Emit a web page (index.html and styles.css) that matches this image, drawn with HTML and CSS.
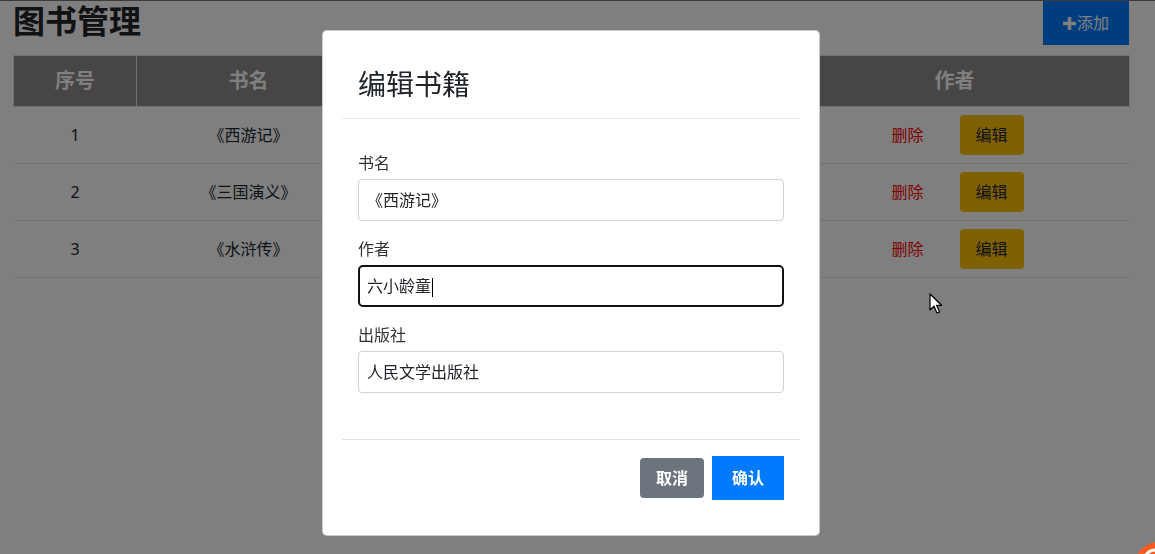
FILE: index.html
```html
<!DOCTYPE html>
<html lang="zh-CN">

<head>
    <meta charset="UTF-8">
    <meta name="viewport" content="width=device-width, initial-scale=1.0">
    <title>图书管理</title>
    <link rel="stylesheet" href="styles.css">
</head>

<body>
    <div class="app">
        <div class="topbar">
            <h2 class="page-title">图书管理</h2>
            <button class="btn-add">
                <svg class="icon-plus" width="13" height="13" viewBox="0 0 13 13">
                    <rect x="4.75" y="0" width="3.5" height="13" fill="currentColor"></rect>
                    <rect x="0" y="4.75" width="13" height="3.5" fill="currentColor"></rect>
                </svg>添加
            </button>
        </div>

        <table class="book-table">
            <colgroup>
                <col class="col-id">
                <col class="col-name">
                <col class="col-press">
                <col class="col-op">
            </colgroup>
            <thead>
                <tr>
                    <th>序号</th>
                    <th>书名</th>
                    <th>出版社</th>
                    <th>作者</th>
                </tr>
            </thead>
            <tbody>
                <tr>
                    <td>1</td>
                    <td>《西游记》</td>
                    <td>吴承恩 / 人民文学出版社</td>
                    <td>
                        <div class="actions">
                            <a class="link-del" href="#">删除</a>
                            <button class="btn-edit">编辑</button>
                        </div>
                    </td>
                </tr>
                <tr>
                    <td>2</td>
                    <td>《三国演义》</td>
                    <td>罗贯中 / 人民文学出版社</td>
                    <td>
                        <div class="actions">
                            <a class="link-del" href="#">删除</a>
                            <button class="btn-edit">编辑</button>
                        </div>
                    </td>
                </tr>
                <tr>
                    <td>3</td>
                    <td>《水浒传》</td>
                    <td>施耐庵 / 人民文学出版社</td>
                    <td>
                        <div class="actions">
                            <a class="link-del" href="#">删除</a>
                            <button class="btn-edit">编辑</button>
                        </div>
                    </td>
                </tr>
            </tbody>
        </table>
    </div>

    <!-- 编辑弹窗 -->
    <div class="modal">
        <div class="modal-dialog">
            <div class="modal-content">
                <div class="modal-header">
                    <h3 class="modal-title">编辑书籍</h3>
                </div>
                <div class="modal-body">
                    <div class="form-group">
                        <label class="form-label">书名</label>
                        <div class="form-control">《西游记》</div>
                    </div>
                    <div class="form-group">
                        <label class="form-label">作者</label>
                        <div class="form-control is-focus">六小龄童<span class="caret"></span></div>
                    </div>
                    <div class="form-group">
                        <label class="form-label">出版社</label>
                        <div class="form-control">人民文学出版社</div>
                    </div>
                </div>
                <div class="modal-footer">
                    <button class="btn-cancel">取消</button>
                    <button class="btn-ok">确认</button>
                </div>
            </div>
        </div>
    </div>

    <svg class="mouse" width="14" height="22" viewBox="0 0 14 22">
        <path d="M1 1 L1 17 L5 13.2 L8 20 L10.5 19 L7.6 12.3 L12.6 12.3 Z" fill="#fff" stroke="#000" stroke-width="1.2" stroke-linejoin="round"></path>
    </svg>

    <svg class="widget" width="20" height="13" viewBox="0 0 20 13">
        <circle cx="24" cy="26" r="25" fill="#ff5a1f"></circle>
        <circle cx="20" cy="20" r="11" fill="none" stroke="#fff" stroke-width="3"></circle>
    </svg>
</body>

</html>
```

FILE: styles.css
```css
* {
    box-sizing: border-box;
}

html,
body {
    margin: 0;
    padding: 0;
}

body {
    font-family: "Noto Sans", "Noto Sans CJK SC", sans-serif;
    font-size: 16px;
    line-height: 24px;
    color: #212529;
    background: #fff;
    border-top: 1px solid #777;
    height: 554px;
    overflow: hidden;
}

button {
    font-family: inherit;
    font-size: 16px;
    line-height: 24px;
    cursor: pointer;
}

.app {
    width: 1116px;
    margin-left: 13px;
}

.topbar {
    display: flex;
    justify-content: space-between;
    align-items: flex-start;
    height: 44px;
    margin-bottom: 10px;
}

.page-title {
    margin: 0;
    font-size: 32px;
    line-height: 40px;
    font-weight: bold;
}

.btn-add {
    display: flex;
    align-items: center;
    gap: 1px;
    height: 44px;
    padding: 0 20px;
    border: 0;
    background: #007bff;
    color: #fff;
}

.icon-plus {
    display: block;
}

/* 表格 */
.book-table {
    width: 1116px;
    table-layout: fixed;
    border-collapse: collapse;
    text-align: center;
}

.col-id {
    width: 123px;
}

.col-name {
    width: 224px;
}

.col-press {
    width: 419px;
}

.col-op {
    width: 350px;
}

.book-table th {
    padding: 11px 0;
    line-height: 28px;
    font-size: 20px;
    font-weight: bold;
    color: #fff;
    background: #8f8a8a;
    border: 1px solid #dee2e6;
}

.book-table td {
    padding: 8px;
    border-bottom: 1px solid #dee2e6;
    vertical-align: middle;
}

.actions {
    display: flex;
    justify-content: center;
    align-items: center;
    gap: 36px;
    padding-left: 6px;
}

.link-del {
    color: #ff0000;
    text-decoration: none;
}

.btn-edit {
    height: 40px;
    padding: 0 16px;
    border: 0;
    border-radius: 4px;
    background: #ffc107;
    color: #212529;
}

/* 弹窗 */
.modal {
    position: fixed;
    top: 0;
    left: 0;
    right: 0;
    bottom: 0;
    background: rgba(0, 0, 0, 0.5);
}

.modal-dialog {
    width: 498px;
    margin: 30px 0 0 322px;
}

.modal-content {
    background: #fff;
    border: 1px solid rgba(0, 0, 0, 0.2);
    border-radius: 5px;
    padding: 19px;
}

.modal-header {
    padding: 16px;
    border-bottom: 1px solid #e9ecef;
}

.modal-title {
    margin: 0;
    font-size: 28px;
    line-height: 36px;
    font-weight: normal;
    color: #212529;
}

.modal-body {
    padding: 32px 16px 30px;
}

.form-group {
    margin-bottom: 16px;
}

.form-label {
    display: block;
    margin-bottom: 4px;
    color: #333;
}

.form-control {
    height: 42px;
    padding: 0 8px;
    line-height: 40px;
    border: 1px solid #ced4da;
    border-radius: 4px;
    color: #212529;
}

.form-control.is-focus {
    border: 2px solid #111;
    border-radius: 5px;
    padding-left: 7px;
    line-height: 38px;
}

.caret {
    display: inline-block;
    width: 1px;
    height: 19px;
    margin-left: 1px;
    background: #000;
    vertical-align: middle;
}

.modal-footer {
    display: flex;
    justify-content: flex-end;
    align-items: center;
    gap: 8px;
    padding: 16px;
    border-top: 1px solid #dee2e6;
}

.btn-cancel {
    height: 40px;
    padding: 0 16px;
    border: 0;
    border-radius: 4px;
    background: #6c757d;
    color: #fff;
    font-weight: bold;
}

.btn-ok {
    height: 44px;
    padding: 0 20px;
    border: 0;
    background: #007bff;
    color: #fff;
    font-weight: bold;
}

.mouse {
    position: fixed;
    left: 929px;
    top: 293px;
}

.widget {
    position: fixed;
    left: 1135px;
    top: 541px;
}
```
